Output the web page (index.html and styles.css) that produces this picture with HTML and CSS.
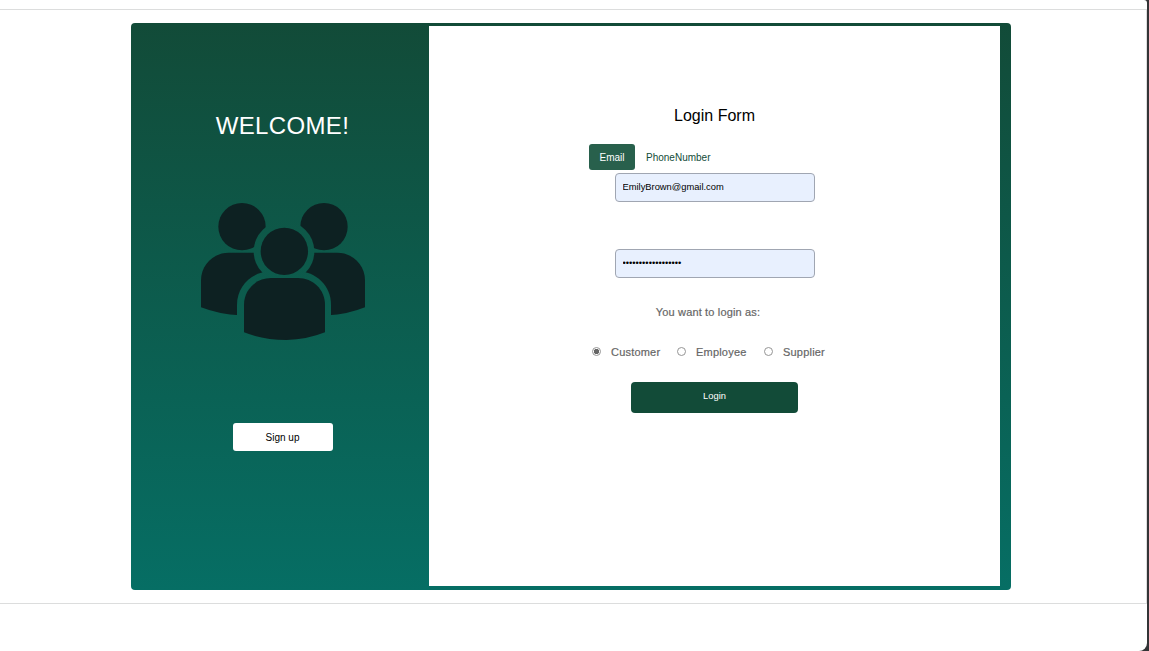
FILE: index.html
```html
<!DOCTYPE html>
<html lang="en">
<head>
<meta charset="utf-8">
<title>Login</title>
<link rel="stylesheet" href="styles.css">
</head>
<body>
<div class="window">
<main class="page">
  <div class="card">
    <section class="welcome">
      <h1 class="welcome-title">WELCOME!</h1>
      <svg class="people" viewBox="33 39 492 411" aria-hidden="true">
        <mask id="gap" maskUnits="userSpaceOnUse" x="0" y="0" width="570" height="480">
          <rect width="570" height="480" fill="#fff"/>
          <circle cx="282" cy="184" r="91" fill="#000"/>
          <path d="M141 480V344C141 288 186 244 243 244H322C378 244 423 288 423 344V480Z" fill="#000"/>
        </mask>
        <g fill="#0d2122">
          <g mask="url(#gap)">
            <circle cx="156" cy="110" r="71"/>
            <circle cx="402" cy="110" r="71"/>
            <path d="M33 352V271C33 225 70 188 116 188H300V376H150Q90 374 33 352Z"/>
            <path d="M525 352V271C525 225 488 188 442 188H260V376H414Q470 374 525 352Z"/>
          </g>
          <circle cx="283" cy="184" r="71"/>
          <path d="M162 427V344C162 299 198 264 243 264H324C369 264 405 299 405 344V427Q350 449 290 450Q218 449 162 427Z"/>
        </g>
      </svg>
      <button class="signup">Sign up</button>
    </section>
    <form class="login">
      <h2 class="login-title">Login Form</h2>
      <div class="tabs">
        <button type="button" class="tab tab-active">Email</button>
        <button type="button" class="tab">PhoneNumber</button>
      </div>
      <input class="field" type="text" value="EmilyBrown@gmail.com" aria-label="Email">
      <input class="field field-password" type="password" value="abcdefghijklmnopqr" aria-label="Password">
      <p class="prompt">You want to login as:</p>
      <div class="roles">
        <label class="role"><input class="radio" type="radio" name="role" checked>Customer</label>
        <label class="role role-wide"><input class="radio" type="radio" name="role">Employee</label>
        <label class="role"><input class="radio" type="radio" name="role">Supplier</label>
      </div>
      <button type="button" class="submit">Login</button>
    </form>
  </div>
</main>
</div>
</body>
</html>
```
FILE: styles.css
```css
* { box-sizing: border-box; }
body {
  margin: 0;
  height: 651px;
  overflow: hidden;
  background: #333436;
  font-family: "Liberation Sans", Arial, sans-serif;
}
h1, h2, p { margin: 0; font-weight: 400; }
button { border: 0; font-family: inherit; padding: 0; }
.window {
  width: 1147px;
  height: 651px;
  padding-top: 9px;
  background: #fff;
  border-radius: 0 3px 8px 0;
}
.page {
  height: 595px;
  padding: 13px 0 0 131px;
  border: solid #dcdddd;
  border-width: 1px 1px 1px 0;
}
.card {
  display: flex;
  width: 880px;
  height: 567px;
  padding: 3px 11px 4px 0;
  border-radius: 4px;
  background: linear-gradient(#124b38, #066e64);
}
.welcome {
  display: flex;
  flex-direction: column;
  align-items: center;
  width: 298px;
  padding: 86px 0 0 5px;
}
.welcome-title {
  height: 28px;
  color: #fff;
  font-size: 24px;
  line-height: 28px;
  letter-spacing: 0.35px;
}
.people {
  width: 164px;
  height: 137px;
  margin-top: 63px;
}
.signup {
  width: 100px;
  height: 28px;
  margin-top: 83px;
  border-radius: 3px;
  background: #fff;
  color: #000;
  font-size: 10px;
  line-height: 29px;
}
.login {
  display: flex;
  flex-direction: column;
  align-items: center;
  width: 571px;
  padding-top: 80px;
  background: #fff;
}
.login-title {
  font-size: 16px;
  line-height: 20px;
  color: #000;
}
.tabs {
  display: flex;
  align-self: flex-start;
  margin: 18px 0 3px 160px;
}
.tab {
  height: 26px;
  padding: 1px 11px 0;
  border-radius: 3px;
  background: transparent;
  color: #124b38;
  font-size: 10px;
}
.tab-active {
  width: 46px;
  padding: 1px 0 0;
  background: #28604c;
  color: #fff;
}
.field {
  width: 200px;
  height: 29px;
  padding: 0 6px 2px 7px;
  border: 1px solid #a0a6b2;
  border-radius: 4px;
  background: #e8f0fe;
  color: #000;
  font: 9.33px "Liberation Sans", Arial, sans-serif;
}
.field-password { margin-top: 47px; }
.prompt {
  margin: 28px 13px 0 0;
  color: #666;
  font-size: 11px;
  line-height: 13px;
  letter-spacing: 0.15px;
  -webkit-text-stroke: 0.2px #666;
}
.roles {
  display: flex;
  align-self: flex-start;
  margin: 26px 0 0 163px;
}
.role {
  display: flex;
  align-items: center;
  width: 85px;
  height: 13px;
  color: #666;
  font-size: 11px;
  letter-spacing: 0.2px;
  -webkit-text-stroke: 0.2px #666;
}
.role-wide { width: 87px; }
.radio {
  appearance: none;
  width: 9px;
  height: 9px;
  margin: 0 10px 1px 0;
  border: 1px solid #959595;
  border-radius: 50%;
  background: #fff;
}
.radio:checked { background: radial-gradient(circle, #666 2.3px, #fff 3px); }
.submit {
  width: 167px;
  height: 31px;
  margin-top: 24px;
  padding-bottom: 3px;
  border-radius: 4px;
  background: #124b38;
  color: #fff;
  font-size: 9.33px;
}
```
